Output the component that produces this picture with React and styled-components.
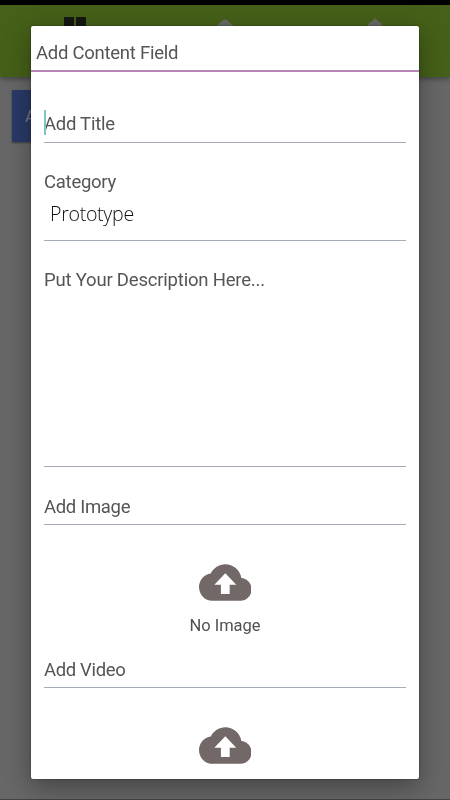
import styled, { createGlobalStyle } from "styled-components";
import { MdCloudUpload } from "react-icons/md";

const GlobalStyle = createGlobalStyle`
  * {
    box-sizing: border-box;
  }
  body {
    margin: 0;
    overflow: hidden;
    font-family: Roboto, "Liberation Sans", sans-serif;
  }
`;
const Screen = styled.div`
  height: 800px;
  background: #676767;
  border-bottom: 1px solid #444;
`;
const StatusBar = styled.div`
  height: 5px;
  background: #000;
`;
const NavBar = styled.nav`
  display: grid;
  grid-template-columns: repeat(3, 1fr);
  justify-items: center;
  height: 72px;
  padding-top: 9px;
  background: #456018;
  box-shadow: 0 2px 5px rgba(0, 0, 0, 0.35);
`;
const NavIcon = styled.svg`
  width: 30px;
  height: 30px;
  fill: ${(props) => props.$color};
`;
const AddButton = styled.button`
  display: block;
  width: 52px;
  height: 52px;
  margin: 13px 0 0 12px;
  padding: 0 0 0 13px;
  border: none;
  background: #293a66;
  color: #74798a;
  font-family: inherit;
  font-size: 16px;
  text-align: left;
  box-shadow: 0 1px 2px rgba(0, 0, 0, 0.4);
`;
const Overlay = styled.div`
  position: fixed;
  inset: 0;
  display: flex;
  justify-content: center;
  align-items: flex-start;
  padding-top: 26px;
`;
const Dialog = styled.div`
  width: 388px;
  height: 753px;
  overflow: hidden;
  border-radius: 2px;
  background: #fff;
  box-shadow: 0 0 2px rgba(0, 0, 0, 0.5), 0 8px 26px rgba(0, 0, 0, 0.35);
`;
const Header = styled.header`
  height: 46px;
  padding: 16px 0 0 5px;
  border-bottom: 2px solid #b884b8;
`;
const Label = styled.div`
  color: #555;
  font-size: 18.5px;
  line-height: 22px;
  letter-spacing: ${(props) => props.$spacing || "-0.2px"};
  white-space: nowrap;
`;
const Form = styled.div`
  padding: 0 13px;
`;
const Field = styled.div`
  display: flex;
  align-items: flex-start;
  flex-direction: column;
  height: ${(props) => props.$height}px;
  padding-top: ${(props) => props.$top}px;
  border-bottom: 1px solid #a6aabd;
`;
const Focused = styled.div`
  position: relative;

  &:before {
    position: absolute;
    content: "";
    top: -3px;
    left: 0;
    width: 2px;
    height: 25px;
    background: #7cc9bc;
  }
`;
const Value = styled.div`
  margin: 8px 0 0 6px;
  color: #111;
  font-family: "Open Sans", sans-serif;
  font-size: 19.6px;
  font-weight: 300;
  line-height: 26px;
  letter-spacing: -0.3px;
`;
const Upload = styled.div`
  display: flex;
  flex-direction: column;
  align-items: center;
  height: 112px;
  padding-top: 29.5px;
`;
const CloudIcon = styled(MdCloudUpload)`
  width: 52.6px;
  height: 55px;
  color: #736868;
`;
const Caption = styled.div`
  margin-top: 5.5px;
  color: #505050;
  font-size: 16.5px;
  line-height: 22px;
`;

function App() {
  return (
    <>
      <GlobalStyle />
      <Screen>
        <StatusBar />
        <NavBar>
          <NavIcon viewBox="0 0 30 30" $color="#151713">
            <path d="M4 3h10v10H4zM16 3h10v10H16zM4 15h10v10H4zM16 15h10v10H16z" />
          </NavIcon>
          <NavIcon viewBox="0 0 30 30" $color="#676a64">
            <path d="M13 6q2-1.500 4 0L29 17h-4v9H5v-9H1z" />
          </NavIcon>
          <NavIcon viewBox="0 0 30 30" $color="#676a64">
            <path d="M15 4.500c1.300 0 2.200 1 2.200 2.500C22 8 23 12 23 17l3 6H4l3-6c0-5 1-9 5.800-10C12.800 5.500 13.700 4.500 15 4.500z" />
          </NavIcon>
        </NavBar>
        <AddButton>A</AddButton>
      </Screen>
      <Overlay>
        <Dialog>
          <Header>
            <Label $spacing="-0.26px">Add Content Field</Label>
          </Header>
          <Form>
            <Field $height={71} $top={41}>
              <Focused>
                <Label $spacing="-0.26px">Add Title</Label>
              </Focused>
            </Field>
            <Field $height={98} $top={28}>
              <Label $spacing="-0.26px">Category</Label>
              <Value>Prototype</Value>
            </Field>
            <Field $height={226} $top={28}>
              <Label>Put Your Description Here...</Label>
            </Field>
            <Field $height={58} $top={29}>
              <Label $spacing="-0.32px">Add Image</Label>
            </Field>
            <Upload>
              <CloudIcon preserveAspectRatio="none" />
              <Caption>No Image</Caption>
            </Upload>
            <Field $height={51} $top={22}>
              <Label $spacing="-0.35px">Add Video</Label>
            </Field>
            <Upload>
              <CloudIcon preserveAspectRatio="none" />
            </Upload>
          </Form>
        </Dialog>
      </Overlay>
    </>
  );
}

export default App;
